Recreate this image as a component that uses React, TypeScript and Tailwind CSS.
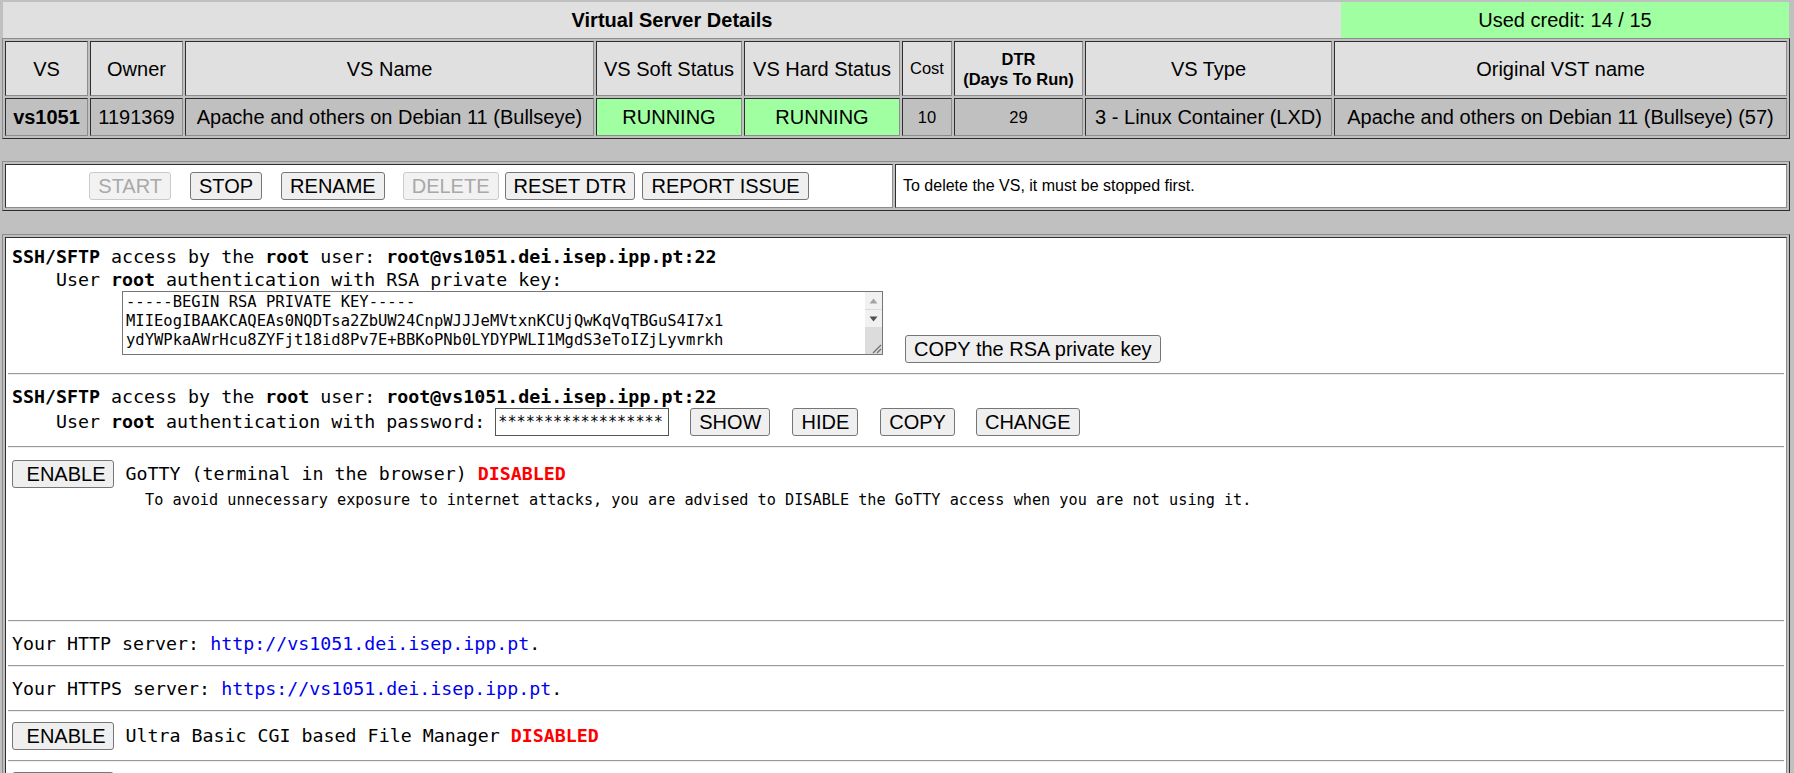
import React from "react";

const arial = "font-['Liberation_Sans',Arial,sans-serif]";
const mono = "font-['DejaVu_Sans_Mono',monospace]";

// old-school table borders: outer box is "outset", cells are "inset"
const outset =
  "border border-t-[#8c8c8c] border-l-[#8c8c8c] border-r-[#2e2e2e] border-b-[#2e2e2e]";
const inset =
  "border border-t-[#2e2e2e] border-l-[#2e2e2e] border-r-[#8c8c8c] border-b-[#8c8c8c]";

type BtnProps = {
  children: React.ReactNode;
  disabled?: boolean;
  className?: string;
};

function Btn({ children, disabled, className = "" }: BtnProps) {
  return (
    <button
      type="button"
      disabled={disabled}
      className={`${arial} h-[28px] shrink-0 whitespace-pre rounded-[3px] border px-2 text-[20px] leading-[22px] ${
        disabled
          ? "border-[#cbcbcb] bg-[#f2f2f2] text-[#a9a9a9]"
          : "border-[#767676] bg-[#efefef] text-black"
      } ${className}`}
    >
      {children}
    </button>
  );
}

function Hr() {
  return (
    <div className="my-[10px] h-[2px] border-t border-b border-t-[#9a9a9a] border-b-[#eeeeee]" />
  );
}

const keyLines = [
  "-----BEGIN RSA PRIVATE KEY-----",
  "MIIEogIBAAKCAQEAs0NQDTsa2ZbUW24CnpWJJJeMVtxnKCUjQwKqVqTBGuS4I7x1",
  "ydYWPkaAWrHcu8ZYFjt18id8Pv7E+BBKoPNb0LYDYPWLI1MgdS3eToIZjLyvmrkh",
];

function KeyBox() {
  return (
    <div className="flex h-[64px] w-[761px] shrink-0 border border-[#767676] bg-white">
      <div className="flex-1 overflow-hidden pl-[3px] pt-[1px] text-[15.5px] leading-[19px] whitespace-pre text-black">
        {keyLines.map((l) => (
          <div key={l}>{l}</div>
        ))}
      </div>
      <div className="flex w-[17px] flex-col bg-[#f1f1f1]">
        <div className="flex h-[17px] items-center justify-center">
          <svg width="9" height="6" viewBox="0 0 9 6">
            <path d="M0.5 5.5 L4.5 0.5 L8.5 5.5 Z" fill="#a3a3a3" />
          </svg>
        </div>
        <div className="h-[1px] bg-[#dadada]" />
        <div className="flex h-[17px] items-center justify-center">
          <svg width="9" height="6" viewBox="0 0 9 6">
            <path d="M0.5 0.5 L4.5 5.5 L8.5 0.5 Z" fill="#505050" />
          </svg>
        </div>
        <div className="flex flex-1 items-end justify-end bg-[#dcdcdc]">
          <svg width="12" height="12" viewBox="0 0 12 12">
            <path d="M11 3 L3 11 M11 7 L7 11" stroke="#6e6e6e" strokeWidth="1.2" />
          </svg>
        </div>
      </div>
    </div>
  );
}

function SshLine() {
  return (
    <div className="h-[23px] leading-[23px] whitespace-pre">
      <b>SSH/SFTP</b> access by the <b>root</b> user: <b>root@vs1051.dei.isep.ipp.pt:22</b>
    </div>
  );
}

function DetailsTable() {
  const head = `${inset} bg-[#e0e0e0] text-center align-middle`;
  const data = `${inset} bg-[#c0c0c0] text-center align-middle whitespace-nowrap`;
  const green = `${inset} bg-[#a0ffa0] text-center align-middle`;
  return (
    <table
      className={`${outset} ${arial} ml-[2px] w-[1788px] table-fixed border-separate border-spacing-[2px] text-[20px] text-black`}
    >
      <tbody>
        <tr className="h-[55px]">
          <td className={`${head} w-[83px]`}>VS</td>
          <td className={`${head} w-[93px]`}>Owner</td>
          <td className={`${head} w-[409px]`}>VS Name</td>
          <td className={`${head} w-[146px]`}>VS Soft Status</td>
          <td className={`${head} w-[156px]`}>VS Hard Status</td>
          <td className={`${head} w-[50px] text-[16.5px]`}>Cost</td>
          <td className={`${head} w-[129px] text-[16.5px] leading-[20px] font-bold`}>
            DTR
            <br />
            (Days To Run)
          </td>
          <td className={`${head} w-[247px]`}>VS Type</td>
          <td className={`${head} w-[453px]`}>Original VST name</td>
        </tr>
        <tr className="h-[38px]">
          <td className={`${data} font-bold`}>vs1051</td>
          <td className={data}>1191369</td>
          <td className={data}>Apache and others on Debian 11 (Bullseye)</td>
          <td className={green}>RUNNING</td>
          <td className={green}>RUNNING</td>
          <td className={`${data} text-[16.5px]`}>10</td>
          <td className={`${data} text-[16.5px]`}>29</td>
          <td className={data}>3 - Linux Container (LXD)</td>
          <td className={data}>Apache and others on Debian 11 (Bullseye) (57)</td>
        </tr>
      </tbody>
    </table>
  );
}

export default function App() {
  return (
    <div className="h-[773px] w-[1794px] overflow-hidden bg-[#c0c0c0] pt-[2px]">
      {/* title strip */}
      <div className={`${arial} ml-[3px] flex h-[36px] w-[1786px] text-[20px] text-black`}>
        <div className="flex flex-1 items-center justify-center bg-[#e0e0e0] font-bold">
          Virtual Server Details
        </div>
        <div className="flex w-[448px] items-center justify-center bg-[#a0ffa0]">
          Used credit: 14 / 15
        </div>
      </div>

      <DetailsTable />

      {/* actions */}
      <div className={`${outset} ml-[2px] mt-[22px] flex w-[1788px] gap-[2px] p-[2px]`}>
        <div className={`${inset} flex h-[44px] w-[888px] items-center justify-center bg-white`}>
          <Btn disabled>START</Btn>
          <Btn className="ml-[19px]">STOP</Btn>
          <Btn className="ml-[19px]">RENAME</Btn>
          <Btn disabled className="ml-[18px]">
            DELETE
          </Btn>
          <Btn className="ml-[6px]">RESET DTR</Btn>
          <Btn className="ml-[7px]">REPORT ISSUE</Btn>
        </div>
        <div
          className={`${inset} ${arial} flex h-[44px] flex-1 items-center bg-white pl-[7px] text-[16px] text-black`}
        >
          To delete the VS, it must be stopped first.
        </div>
      </div>

      {/* access panel */}
      <div className={`${outset} ml-[2px] mt-[23px] w-[1788px] p-[2px]`}>
        <div className={`${inset} ${mono} bg-white px-[2px] pb-[40px] text-[18.3px] text-black`}>
          <div className="pl-[4px] pt-[7px]">
            <SshLine />
            <div className="h-[23px] pl-[44px] leading-[23px] whitespace-pre">
              User <b>root</b> authentication with RSA private key:
            </div>
            <div className="flex items-start pl-[110px]">
              <KeyBox />
              <Btn className="ml-[22px] mt-[44px]">COPY the RSA private key</Btn>
            </div>
          </div>

          <Hr />
          <div className="pl-[4px]">
            <SshLine />
            <div className="flex h-[28px] items-center pl-[44px]">
              <span className="whitespace-pre">
                User <b>root</b> authentication with password:
              </span>
              <div className="ml-[10px] flex h-[28px] w-[174px] shrink-0 items-center overflow-hidden border border-[#555555] pl-[2px] text-[15.2px] whitespace-pre">
                ******************
              </div>
              <Btn className="ml-[21px]">SHOW</Btn>
              <Btn className="ml-[22px]">HIDE</Btn>
              <Btn className="ml-[22px]">COPY</Btn>
              <Btn className="ml-[21px]">CHANGE</Btn>
            </div>
          </div>

          <Hr />
          <div className="pl-[4px]">
            <div className="flex h-[32px] items-center">
              <Btn>{"\u00a0ENABLE"}</Btn>
              <span className="ml-[11px] whitespace-pre">
                GoTTY (terminal in the browser) <b className="text-[#ff0000]">DISABLED</b>
              </span>
            </div>
            <div className="h-[20px] pl-[133px] text-[15.2px] leading-[20px] whitespace-pre">
              To avoid unnecessary exposure to internet attacks, you are advised to DISABLE the GoTTY
              access when you are not using it.
            </div>
            <div className="h-[100px]" />
          </div>

          <Hr />
          <div className="h-[23px] pl-[4px] leading-[23px] whitespace-pre">
            Your HTTP server: <a className="text-[#0000ee]">http://vs1051.dei.isep.ipp.pt</a>.
          </div>

          <Hr />
          <div className="h-[23px] pl-[4px] leading-[23px] whitespace-pre">
            Your HTTPS server: <a className="text-[#0000ee]">https://vs1051.dei.isep.ipp.pt</a>.
          </div>

          <Hr />
          <div className="flex h-[28px] items-center pl-[4px]">
            <Btn>{"\u00a0ENABLE"}</Btn>
            <span className="ml-[11px] whitespace-pre">
              Ultra Basic CGI based File Manager <b className="text-[#ff0000]">DISABLED</b>
            </span>
          </div>

          <Hr />
          <div className="flex h-[28px] items-center pl-[4px]">
            <Btn>{"\u00a0ENABLE"}</Btn>
          </div>
        </div>
      </div>
    </div>
  );
}
